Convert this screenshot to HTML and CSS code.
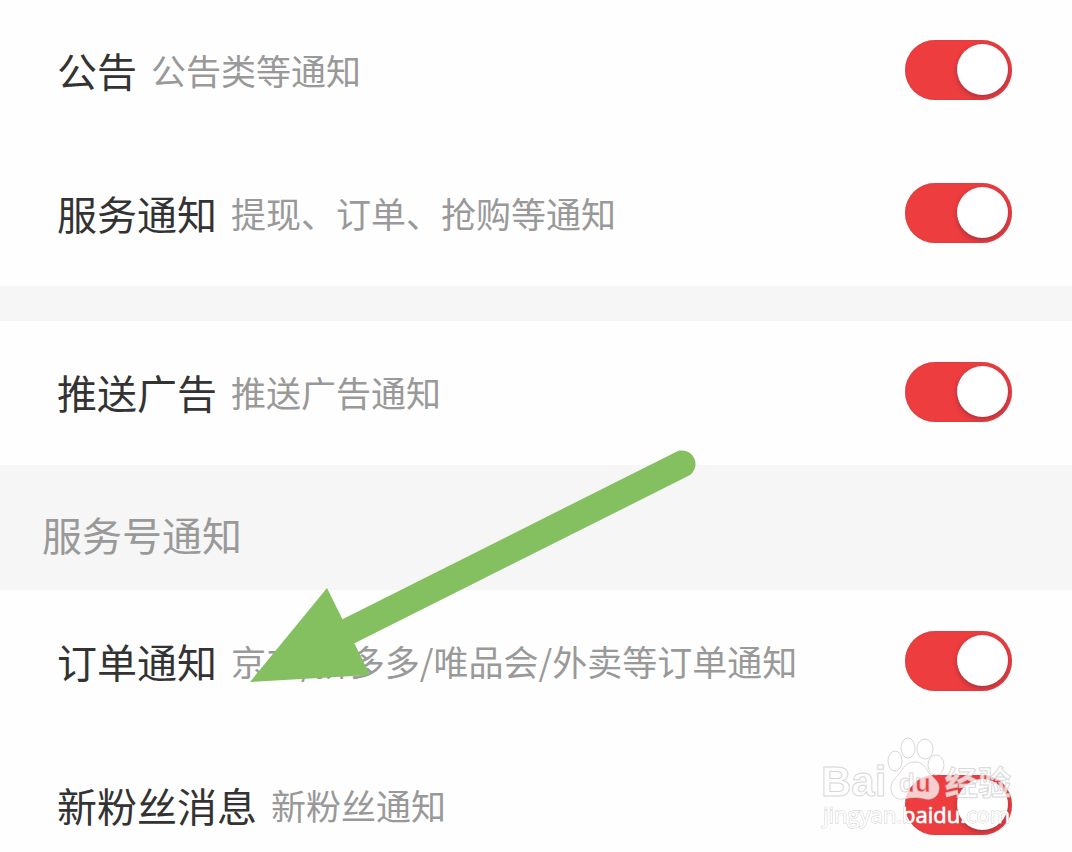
FILE: index.html
```html
<!DOCTYPE html>
<html lang="zh-CN">

<head>
  <meta charset="UTF-8" />
  <meta name="viewport" content="width=device-width, initial-scale=1.0" />
  <title>通知</title>
  <link rel="stylesheet" href="styles.css">
</head>

<body>
  <main class="page">
    <div class="group first">
      <label class="row">
        <span class="name">公告</span>
        <span class="desc">公告类等通知</span>
        <input class="switch" type="checkbox" checked />
      </label>
      <label class="row">
        <span class="name">服务通知</span>
        <span class="desc">提现、订单、抢购等通知</span>
        <input class="switch" type="checkbox" checked />
      </label>
    </div>

    <div class="group spaced">
      <label class="row">
        <span class="name">推送广告</span>
        <span class="desc">推送广告通知</span>
        <input class="switch" type="checkbox" checked />
      </label>
    </div>

    <h2 class="group-title">服务号通知</h2>

    <div class="group">
      <label class="row">
        <span class="name">订单通知</span>
        <span class="desc">京东/拼多多/唯品会/外卖等订单通知</span>
        <input class="switch" type="checkbox" checked />
      </label>
      <label class="row">
        <span class="name">新粉丝消息</span>
        <span class="desc">新粉丝通知</span>
        <input class="switch" type="checkbox" checked />
      </label>
    </div>

    <svg class="arrow" width="456" height="240" viewBox="0 0 456 240" aria-hidden="true">
      <path class="shaft" d="M104 183 L437 16" />
      <path class="head" d="M5 234 L82 140 L125 227 Z" />
    </svg>

    <svg class="watermark" width="200" height="100" viewBox="0 0 200 100">
      <mask id="pad">
        <rect width="200" height="100" fill="#fff" />
        <text class="du" x="79" y="61">du</text>
      </mask>
      <text class="mark brand" x="1" y="65">Bai</text>
      <ellipse class="mark" cx="75" cy="30" rx="7" ry="10" />
      <ellipse class="mark" cx="88" cy="17" rx="7" ry="10" />
      <ellipse class="mark" cx="105" cy="18" rx="8" ry="10" />
      <ellipse class="mark" cx="116" cy="34" rx="8" ry="10" />
      <path class="mark" mask="url(#pad)" d="M95 31 C87 31 83 37 80 42 C76 47 71 50 71 57 C71 65 76 69 83 68 C91 66 99 66 106 68 C114 69 119 64 119 57 C119 50 113 47 109 42 C106 37 103 31 95 31 Z" />
      <text class="du outline" x="79" y="61">du</text>
      <text class="mark cn" x="125" y="64">经验</text>
      <text class="mark url" x="3" y="92">jingyan.baidu.com</text>
    </svg>
  </main>
</body>

</html>
```

FILE: styles.css
```css
* {
  box-sizing: border-box;
}

body {
  margin: 0;
  background-color: #f6f6f6;
  font-family: "Noto Sans CJK SC", sans-serif;
  color: #333;
}

.page {
  position: relative;
  height: 100vh;
  overflow: hidden;
}

.group {
  background-color: #fefefe;
}

.group.spaced {
  margin-top: 35px;
}

.row {
  display: flex;
  align-items: center;
  height: 144px;
  padding: 0 60px 2px 57px;
}

.first .row:first-child {
  height: 142px;
}

.name {
  font-size: 40px;
  line-height: 60px;
}

.desc {
  margin-left: 14px;
  font-size: 35px;
  line-height: 60px;
  color: #999;
}

.switch {
  appearance: none;
  flex: none;
  width: 107px;
  height: 60px;
  margin: 0 0 0 auto;
  padding: 4px;
  border-radius: 30px;
  background-color: #bbb;
  cursor: pointer;
}

.switch::before {
  content: "";
  display: block;
  width: 51px;
  height: 51px;
  border-radius: 50%;
  background-color: #fff;
  box-shadow: 0 2px 5px rgba(60, 30, 60, 0.4);
}

.switch:checked {
  background-color: #ee3d3e;
  box-shadow: inset 0 0 2px #b84450;
}

.switch:checked::before {
  margin-left: auto;
}

.group-title {
  margin: 0;
  padding: 39px 42px 26px;
  font-size: 40px;
  font-weight: normal;
  line-height: 60px;
  color: #999;
}

/* pointer over the order notice row */
.arrow {
  position: absolute;
  left: 245px;
  top: 448px;
  pointer-events: none;
}

.shaft {
  fill: none;
  stroke: #84bf60;
  stroke-width: 27px;
  stroke-linecap: round;
}

.head {
  fill: #84bf60;
}

.watermark {
  position: absolute;
  right: 52px;
  top: 731px;
  pointer-events: none;
}

.mark {
  fill: rgba(255, 255, 255, 0.75);
  stroke: rgba(205, 205, 205, 0.8);
  stroke-width: 1px;
}

.brand {
  font: bold 42px "Liberation Sans", sans-serif;
}

.du {
  font: bold 26px "Liberation Sans", sans-serif;
}

.outline {
  fill: none;
  stroke: rgba(215, 205, 205, 0.8);
}

.cn {
  font: bold 33px "Noto Sans CJK SC", sans-serif;
}

.url {
  font: 22px "Open Sans", sans-serif;
  fill: #fff;
  stroke: #d0d0d0;
  paint-order: stroke;
}
```
